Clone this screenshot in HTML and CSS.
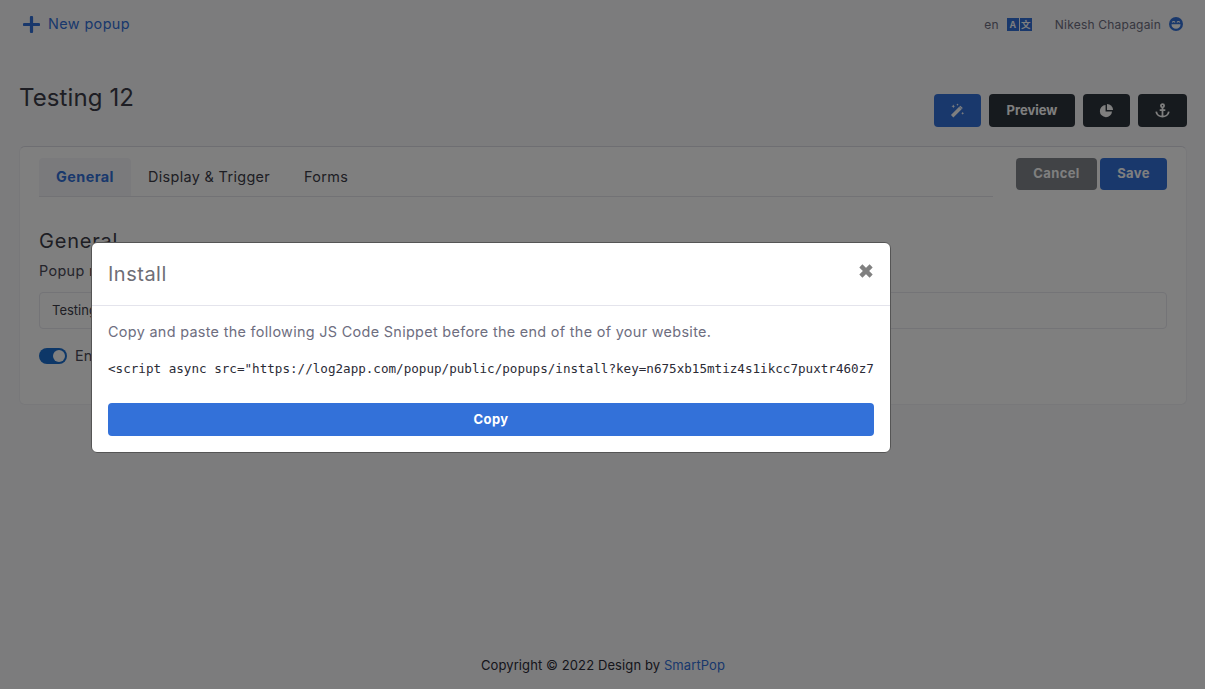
FILE: index.html
```html
<!DOCTYPE html>
<html lang="en">
<head>
<meta charset="utf-8">
<title>Testing 12</title>
<link rel="stylesheet" href="styles.css">
</head>
<body>
<div class="page">
  <header class="topbar">
    <a class="new-link" href="#">
      <svg class="plus" viewBox="0 0 18 18"><path d="M9 1.500v15M1.500 9h15"/></svg>
      <span class="new-text">New popup</span>
    </a>
    <div class="top-right">
      <span class="lang">en</span>
      <span class="translate"><b>A</b><b>文</b></span>
      <span class="user">Nikesh Chapagain</span>
      <svg class="grin" viewBox="0 0 16 16"><circle cx="8" cy="8" r="8" fill="#3371d9"/><path d="M2.800 8.200h10.400c0 3.200-2.300 5.200-5.200 5.200s-5.200-2-5.200-5.200z" fill="#fff"/><path d="M3.800 6.300c.5-1.600 2.500-1.600 3 0M9.200 6.300c.5-1.600 2.500-1.600 3 0" fill="none" stroke="#fff" stroke-width="1.300"/></svg>
    </div>
  </header>

  <section class="title-row">
    <h1>Testing 12</h1>
    <div class="actions">
      <button class="btn btn-blue btn-icon wand-btn">
        <svg viewBox="0 0 16 16"><path d="M1 12.800 9.800 4l2.600 2.600-8.800 8.800z" fill="#fff"/><path d="M11 2.800l2.600 2.600-1 1-2.600-2.600z" fill="#fff"/><path d="M3.500 1.500l.6 1.400 1.400.6-1.400.6-.6 1.400-.6-1.400-1.400-.6 1.400-.6zM13.500 9.500l.5 1 1 .5-1 .5-.5 1-.5-1-1-.5 1-.5zM8 .5l.4.9.9.4-.9.4-.4.9-.4-.9-.9-.4.9-.4z" fill="#fff"/></svg>
      </button>
      <button class="btn btn-dark preview-btn">Preview</button>
      <button class="btn btn-dark btn-icon pie-btn">
        <svg viewBox="0 0 16 16"><path d="M7 2.100A6.500 6.500 0 1 0 13.900 9H7z" fill="#fff"/><path d="M8.500 1a6.500 6.500 0 0 1 6.500 6.500H8.500z" fill="#fff"/></svg>
      </button>
      <button class="btn btn-dark btn-icon anchor-btn">
        <svg viewBox="0 0 16 16"><g fill="none" stroke="#fff" stroke-width="1.900"><circle cx="8" cy="3" r="1.700"/><path d="M8 4.700V14.500M5 7.500h6M1.300 9.200C1.700 12.700 5 14.500 8 14.500s6.300-1.800 6.700-5.300"/></g></svg>
      </button>
    </div>
  </section>

  <section class="card">
    <div class="card-top">
      <nav class="tabs">
        <a class="tab active" href="#">General</a>
        <a class="tab" href="#">Display &amp; Trigger</a>
        <a class="tab" href="#">Forms</a>
      </nav>
      <div class="form-actions">
        <button class="btn btn-grey cancel-btn">Cancel</button>
        <button class="btn btn-blue save-btn">Save</button>
      </div>
    </div>
    <h2>General</h2>
    <label class="field-label">Popup name</label>
    <div class="input">Testing 12</div>
    <div class="switch-row">
      <span class="switch"><i></i></span>
      <span>Enable</span>
    </div>
  </section>

  <footer class="footer">Copyright © 2022 Design by <a href="#">SmartPop</a></footer>
</div>

<div class="backdrop">
  <div class="modal">
    <div class="modal-head">
      <h3>Install</h3>
      <svg class="close" viewBox="0 0 14 14"><path d="M2.500 2.500l9 9M11.500 2.500l-9 9"/></svg>
    </div>
    <div class="modal-body">
      <p class="intro">Copy and paste the following JS Code Snippet before the end of the of your website.</p>
      <div class="snippet"><code>&lt;script async src="https://log2app.com/popup/public/popups/install?key=n675xb15mtiz4s1ikcc7puxtr460z7"&gt;&lt;/script&gt;</code></div>
      <button class="copy">Copy</button>
    </div>
  </div>
</div>
</body>
</html>
```
FILE: styles.css
```css
* { box-sizing: border-box; }
html, body { margin: 0; height: 100%; }
body {
  background: #f8f8fb;
  color: #2b2b36;
  font-family: Inter, "Open Sans", sans-serif;
  font-size: 14px;
  overflow: hidden;
}
a { text-decoration: none; }
.page { height: 689px; display: flex; flex-direction: column; padding: 0 18px 0 19px; }

.topbar { height: 48px; display: flex; justify-content: space-between; align-items: center; flex: none; }
.new-link { display: flex; align-items: center; gap: 8px; color: #3371d9; font-size: 14.400px; letter-spacing: .4px; margin-left: 4px; }
.new-text { margin-top: -1px; }
.plus { width: 17px; height: 17px; fill: none; stroke: #3371d9; stroke-width: 3.400; stroke-linecap: round; }
.top-right { display: flex; align-items: center; font-size: 12px; letter-spacing: .2px; color: #6e6e80; margin-right: 4px; }
.lang { margin-right: 8px; }
.translate { display: flex; gap: 1px; margin-right: 23px; }
.translate b { width: 12px; height: 13px; background: #3371d9; color: #fff; font-size: 9.500px; line-height: 13px; letter-spacing: 0; text-align: center; font-weight: 700; font-family: "Noto Sans CJK SC", Inter, sans-serif; }
.user { margin-right: 8px; }
.grin { width: 14px; height: 14px; }

.title-row { display: flex; justify-content: space-between; height: 98px; padding-top: 46px; flex: none; }
h1 { margin: -13px 0 0; font-size: 24px; font-weight: 400; letter-spacing: .1px; line-height: 34px; color: #3c3c48; }
.actions { display: flex; gap: 8px; align-items: flex-start; }
.btn { border: 0; border-radius: 4px; height: 33px; padding: 0; color: #fff; font: 700 13px Inter, sans-serif; display: flex; align-items: center; justify-content: center; }
.btn svg { width: 15px; height: 15px; }
.btn-blue { background: #3371d9; }
.btn-dark { background: #2d343c; }
.btn-grey { background: #82868c; }
.wand-btn, .pie-btn { width: 47px; }
.preview-btn { width: 86px; padding-bottom: 1px; }
.anchor-btn { width: 49px; }

.card { height: 259px; flex: none; background: #fff; border: 1px solid #f0f0f4; border-top-color: #dcdce4; border-radius: 6px; padding: 11px 19px 0; }
.card-top { display: flex; justify-content: space-between; align-items: flex-start; }
.tabs { width: 954px; height: 39px; display: flex; border-bottom: 1px solid #e4e4ea; }
.tab { padding: 0 17px; height: 38px; line-height: 37px; color: #3c3c48; font-size: 14.400px; letter-spacing: .35px; }
.tab.active { background: #f4f5f9; color: #3371d9; font-weight: 700; letter-spacing: .45px; border-radius: 4px 4px 0 0; }
.form-actions { display: flex; gap: 3px; }
.cancel-btn { width: 81px; height: 32px; padding-bottom: 2px; letter-spacing: .35px; }
.save-btn { width: 67px; height: 32px; padding-bottom: 2px; letter-spacing: .35px; }
h2 { margin: 32px 0 0; font-size: 20px; font-weight: 400; letter-spacing: .8px; line-height: 24px; color: #3c3c48; }
.field-label { display: block; margin-top: 8px; font-size: 14.400px; letter-spacing: .35px; line-height: 20px; color: #4a4a58; }
.input { height: 37px; margin-top: 11px; border: 1px solid #e8e8ee; border-radius: 4px; padding: 0 12px; line-height: 35px; font-size: 13px; color: #3c3c48; }
.switch-row { display: flex; align-items: center; gap: 8px; margin-top: 18px; color: #4a4a58; font-size: 14.400px; height: 17px; }
.switch { width: 28px; height: 16px; border-radius: 8px; background: #1a6fd0; display: flex; justify-content: flex-end; align-items: center; padding-right: 2px; }
.switch i { width: 12px; height: 12px; border-radius: 50%; background: #fff; }

.footer { margin-top: auto; height: 48px; text-align: center; font-size: 13px; letter-spacing: .1px; line-height: 48px; color: #2b2b36; }
.footer a { color: #3371d9; }

.backdrop { position: fixed; inset: 0; background: rgba(0,0,0,.5); padding: 242px 0 0 91px; }
.modal { width: 800px; height: 211px; background: #fff; border: 1px solid #555; border-radius: 6px; }
.modal-head { height: 63px; border-bottom: 1px solid #e4e4ec; display: flex; justify-content: space-between; align-items: center; padding: 0 16px; }
h3 { margin: 0; font-size: 20px; font-weight: 400; letter-spacing: .5px; color: #6e6e76; }
.close { width: 16px; height: 16px; margin-top: -7px; fill: none; stroke: #808080; stroke-width: 3.800; }
.modal-body { padding: 0 16px; }
.intro { margin: 16px 0 0; font-size: 14.400px; letter-spacing: .32px; line-height: 20px; color: #6e6e80; }
.snippet { margin-top: 17px; height: 18px; overflow: hidden; white-space: nowrap; }
code { font-family: "DejaVu Sans Mono", monospace; font-size: 12.600px; line-height: 18px; color: #2b2b36; }
.copy { display: block; width: 100%; height: 33px; margin-top: 26px; padding-bottom: 2px; border: 0; border-radius: 4px; background: #3371d9; color: #fff; font: 700 13px Inter, sans-serif; letter-spacing: .4px; }
```
